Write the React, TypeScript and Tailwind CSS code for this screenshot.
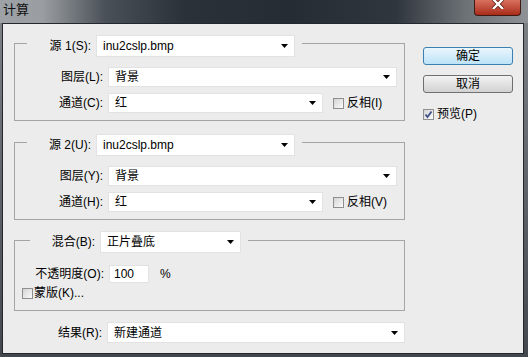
import React from 'react';

const font = "font-['Liberation_Sans','Noto_Sans_CJK_SC',sans-serif]";

const Arrow: React.FC = () => (
  <svg width="7" height="4" viewBox="0 0 7 4" className="shrink-0">
    <polygon points="0,0 7,0 3.5,4" fill="#000" />
  </svg>
);

const Select: React.FC<{ text: string; w: string; h?: string }> = ({ text, w, h = 'h-[20px]' }) => (
  <div className={`${w} ${h} flex items-center justify-between bg-white border border-[#e2e2e2] pl-[6px] pr-[6px]`}>
    <span className="leading-none">{text}</span>
    <Arrow />
  </div>
);

const Check: React.FC<{ checked?: boolean }> = ({ checked }) => (
  <div className="w-[11px] h-[11px] shrink-0 border border-[#8e8f8f] bg-gradient-to-br from-[#d4d4d4] to-[#fbfbfb] flex items-center justify-center">
    {checked && (
      <svg width="9" height="9" viewBox="0 0 9 9">
        <path d="M1.5 4.5 L3.5 7 L7.5 1.5" fill="none" stroke="#3d4f86" strokeWidth="1.8" />
      </svg>
    )}
  </div>
);

const Row: React.FC<{ label: string; children: React.ReactNode; lw?: string }> = ({ label, children, lw = 'w-[88px]' }) => (
  <div className="flex items-center">
    <span className={`${lw} text-right leading-none`}>{label}</span>
    <div className="ml-[5px] flex items-center">{children}</div>
  </div>
);

const SourceGroup: React.FC<{ n: string; key1: string; key2: string; key3: string; key4: string }> = ({ n, key1, key2, key3, key4 }) => (
  <fieldset className="w-[391px] border border-[#a5a5a5]">
    <legend className="ml-[12px] h-[16px]">
      <div className="flex items-center h-[22px] pr-[7px]">
        <span className="w-[64px] text-right leading-none">源 {n}({key1}):</span>
        <div className="ml-[5px]">
          <Select text="inu2cslp.bmp" w="w-[199px]" h="h-[22px]" />
        </div>
      </div>
    </legend>
    <div className="mt-[16px] pb-[7px] flex flex-col gap-[6px]">
      <Row label={`图层(${key2}):`}>
        <Select text="背景" w="w-[289px]" />
      </Row>
      <Row label={`通道(${key3}):`}>
        <Select text="红" w="w-[215px]" />
        <div className="ml-[10px] flex items-center gap-[3px]">
          <Check />
          <span className="leading-none">反相({key4})</span>
        </div>
      </Row>
    </div>
  </fieldset>
);

const Button: React.FC<{ text: string; primary?: boolean }> = ({ text, primary }) => (
  <div
    className={
      primary
        ? 'w-[90px] h-[18px] rounded-[3px] border border-[#3c7fb1] bg-gradient-to-b from-[#eaf6fd] to-[#bde3f7] flex items-center justify-center leading-none'
        : 'w-[90px] h-[18px] rounded-[3px] border border-[#707070] bg-gradient-to-b from-[#f3f3f3] to-[#d2d2d2] flex items-center justify-center leading-none'
    }
  >
    {text}
  </div>
);

const App: React.FC = () => {
  return (
    <div className={`w-[528px] h-[357px] overflow-hidden bg-gradient-to-b from-[#7f8489] to-[#43484e] text-[12px] text-black ${font}`}>
      {/* title bar */}
      <div className="h-[23px] flex items-start justify-between bg-[linear-gradient(to_right,#9ea2a6_0%,#9a9ea2_8%,#4a5057_20%,#2b3138_35%,#262c33_55%,#30363d_75%,#6c7176_88%,#8e9296_100%)]">
        <span className="ml-[3px] mt-[3px] leading-none text-[#111] text-[13px]">计算</span>
        <div className="mr-[7px] w-[47px] h-[16px] rounded-b-[4px] border border-t-0 border-[#3f1a14] bg-gradient-to-b from-[#d9705f] to-[#a82a16] flex items-start justify-center">
          <svg width="12" height="10" viewBox="0 0 12 10" className="mt-[-1px]">
            <path d="M1 0 L11 10 M11 0 L1 10" stroke="#5a1a10" strokeWidth="4" />
            <path d="M1 0 L11 10 M11 0 L1 10" stroke="#fff" strokeWidth="2.4" />
          </svg>
        </div>
      </div>

      {/* client */}
      <div className="ml-[2px] w-[522px] h-[331px] border border-[#24282d] bg-[#ececec] flex">
        <div className="w-[402px] pl-[11px] pt-[11px] flex flex-col">
          <SourceGroup n="1" key1="S" key2="L" key3="C" key4="I" />
          <div className="mt-[13px]">
            <SourceGroup n="2" key1="U" key2="Y" key3="H" key4="V" />
          </div>

          <fieldset className="mt-[11px] w-[391px] border border-[#a5a5a5]">
            <legend className="ml-[15px] h-[18px]">
              <div className="flex items-center h-[22px] pr-[7px]">
                <span className="w-[65px] text-right leading-none">混合(B):</span>
                <div className="ml-[5px]">
                  <Select text="正片叠底" w="w-[141px]" h="h-[22px]" />
                </div>
              </div>
            </legend>
            <div className="mt-[16px] pb-[11px] flex flex-col">
              <Row label="不透明度(O):" lw="w-[89px]">
                <div className="w-[40px] h-[18px] bg-white border border-[#e2e2e2] pl-[4px] flex items-center leading-none">100</div>
                <span className="ml-[11px] leading-none">%</span>
              </Row>
              <div className="mt-[4px] h-[12px] pl-[7px] flex items-center gap-[1px]">
                <Check />
                <span className="leading-none">蒙版(K)...</span>
              </div>
            </div>
          </fieldset>

          <div className="mt-[11px]">
            <Row label="结果(R):" lw="w-[89px]">
              <Select text="新建通道" w="w-[298px]" h="h-[21px]" />
            </Row>
          </div>
        </div>

        <div className="pl-[18px] pt-[23px] flex flex-col">
          <Button text="确定" primary />
          <div className="mt-[10px]">
            <Button text="取消" />
          </div>
          <div className="mt-[15px] flex items-center gap-[3px]">
            <Check checked />
            <span className="leading-none">预览(P)</span>
          </div>
        </div>
      </div>
    </div>
  );
};

export default App;
